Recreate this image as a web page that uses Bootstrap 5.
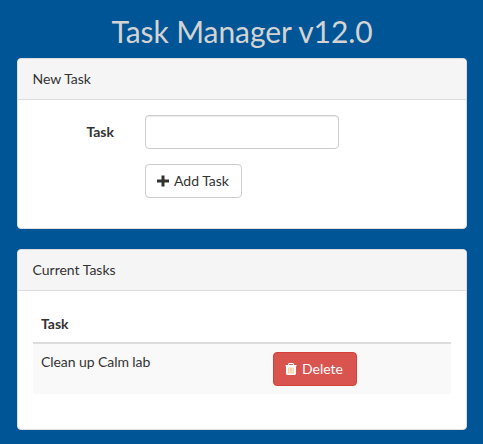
<!DOCTYPE html>
<html lang="en">
<head>
<meta charset="utf-8">
<meta name="viewport" content="width=device-width, initial-scale=1">
<title>Task Manager</title>
<link href="https://cdn.jsdelivr.net/npm/bootstrap@5.3.0/dist/css/bootstrap.min.css" rel="stylesheet">
<style>
body{background:#005596;font:14px/20px Lato,sans-serif;color:#333;overflow:hidden}
.page{width:450px;margin-left:17px;padding-top:15px}
.page-title{font-size:30px;line-height:33px;font-weight:400;color:#d3d3d3;letter-spacing:-.06px;margin:0 0 10px}
.panel{--bs-card-border-color:#ddd;--bs-card-border-radius:4px;--bs-card-inner-border-radius:3px;--bs-card-cap-bg:#f5f5f5;--bs-card-cap-padding-y:10px;--bs-card-cap-padding-x:15px;--bs-card-spacer-x:15px;--bs-card-spacer-y:15px;color:#333;margin-bottom:20px}
.panel .card-header{padding-left:14.500px}
.field-row{--bs-gutter-x:30px;margin-bottom:15px}
.field-label{font-weight:700;padding-top:7px;padding-right:16px}
.form-control{height:34px;border-color:#ccc;border-radius:4px;box-shadow:inset 0 1px 1px rgba(0,0,0,.075)}
.btn{--bs-btn-font-size:14px;--bs-btn-line-height:20px;--bs-btn-border-radius:4px;--bs-btn-padding-x:12px;--bs-btn-padding-y:6px}
.btn-add{--bs-btn-color:#333;--bs-btn-bg:#fff;--bs-btn-border-color:#ccc}
.btn-danger{--bs-btn-bg:#d9534f;--bs-btn-border-color:#d43f3a}
.btn-delete{width:84px}
.btn svg{display:block;margin:0 5px 0 -1px}
.task-table{--bs-table-striped-bg:#f9f9f9;--bs-table-striped-color:#333;color:#333;table-layout:fixed;margin-bottom:20px}
.task-table>:not(caption)>*>*{border:0;padding:8px}
.task-table>thead>tr>th{border-bottom:2px solid #ddd}
.task-table>tbody>tr>td:first-child{letter-spacing:-.07px}
.task-col{width:232px}
</style>
</head>
<body>
<main class="page">
  <h1 class="page-title text-center">Task Manager v12.0</h1>
  <section class="card panel">
    <div class="card-header">New Task</div>
    <div class="card-body">
      <form>
        <div class="row field-row">
          <label for="task-name" class="col-3 field-label text-end">Task</label>
          <div class="col-6"><input type="text" id="task-name" class="form-control"></div>
        </div>
        <div class="row field-row">
          <div class="col-6 offset-3">
            <button type="button" class="btn btn-add d-inline-flex align-items-center">
              <svg width="12" height="12" viewBox="0 0 12 12" aria-hidden="true"><path fill="#333" d="M4.500 .5h3v4H12v3H7.500v4h-3v-4H0v-3h4.500z"/></svg>Add Task
            </button>
          </div>
        </div>
      </form>
    </div>
  </section>
  <section class="card panel">
    <div class="card-header">Current Tasks</div>
    <div class="card-body">
      <table class="table table-striped task-table">
        <thead><tr><th class="task-col">Task</th><th></th></tr></thead>
        <tbody>
          <tr>
            <td>Clean up Calm lab</td>
            <td>
              <button type="button" class="btn btn-danger btn-delete d-flex align-items-center">
                <svg width="12" height="12" viewBox="0 0 12 12" aria-hidden="true"><path fill="#fff" d="M3 2V1l1-1h4l1 1v1h2.500v1.200H.5V2zM4.200 2h3.600V1H4.200z"/><path fill="#fff" d="M1 3h10v8l-1 1H2l-1-1z"/><path fill="#fbd3a6" d="M3 4.500h6v6H3z"/><path stroke="#fde6cc" d="M4.500 4.500v6M7.500 4.500v6"/></svg>Delete
              </button>
            </td>
          </tr>
        </tbody>
      </table>
    </div>
  </section>
</main>
<script src="https://cdn.jsdelivr.net/npm/bootstrap@5.3.0/dist/js/bootstrap.bundle.min.js"></script>
</body>
</html>
